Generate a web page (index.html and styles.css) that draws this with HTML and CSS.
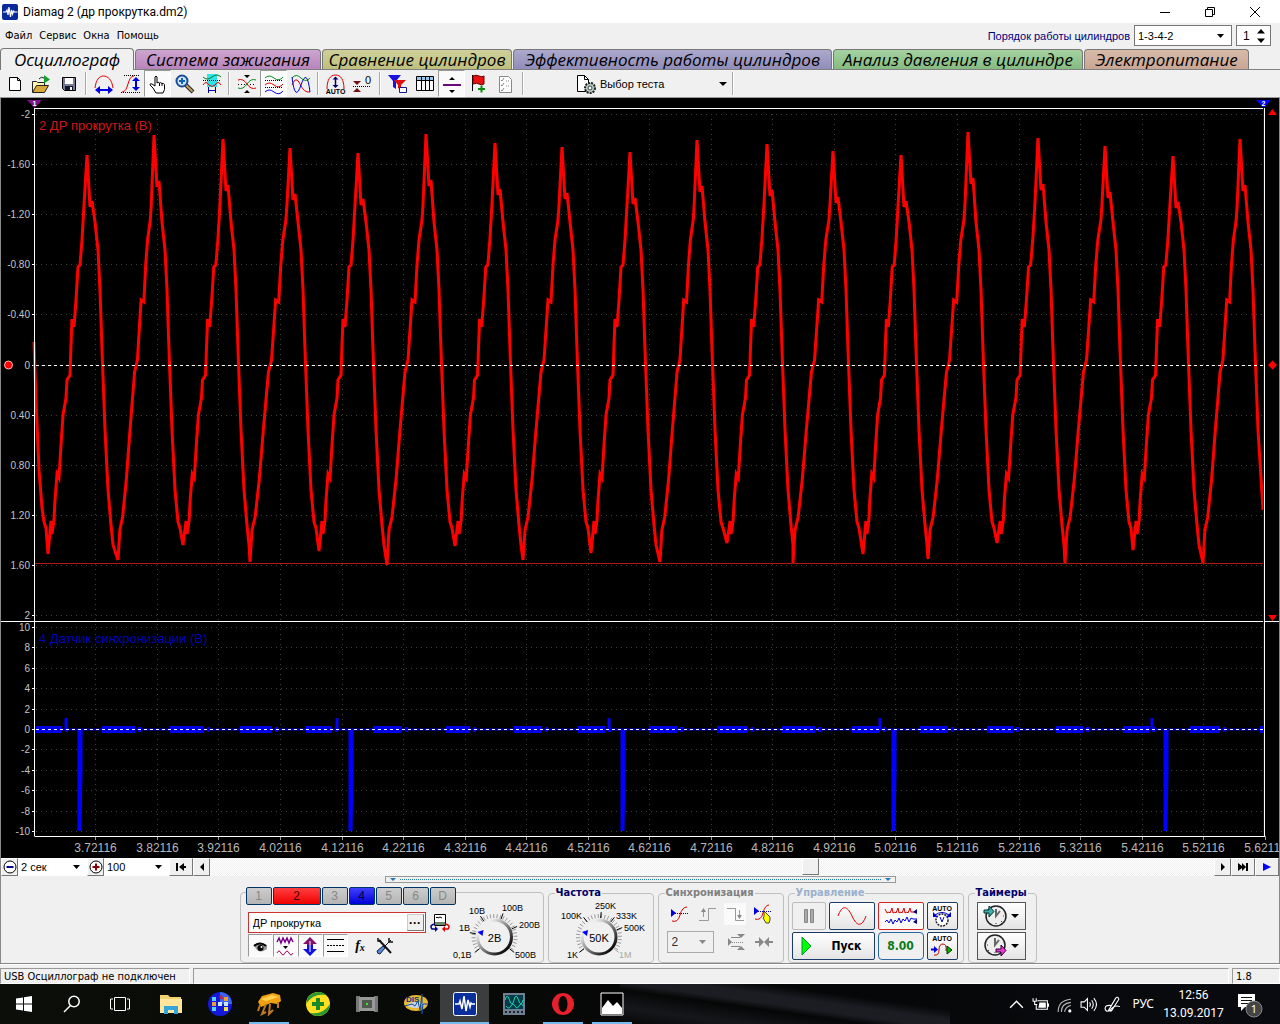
FILE: index.html
```html
<!DOCTYPE html>
<html lang="ru">
<head>
<meta charset="utf-8">
<title>Diamag 2 (др прокрутка.dm2)</title>
<link rel="stylesheet" href="styles.css">
</head>
<body>
<div class="app">
<header class="titlebar">
  <svg class="logo" viewBox="0 0 16 16"><rect width="16" height="16" rx="2" fill="#0a2a9a"/><path d="M1 8h3l1-2 1 5 1-8 1.500 10 1-7 1 4 1-3 1 1h3" fill="none" stroke="#fff" stroke-width="1.200"/></svg>
  <h1>Diamag 2 (др прокрутка.dm2)</h1>
  <div class="winbtns">
    <button aria-label="Свернуть"><svg viewBox="0 0 12 12"><path d="M1 6.500h10" stroke="#000"/></svg></button>
    <button aria-label="Восстановить"><svg viewBox="0 0 12 12"><path d="M1.500 3.500h7v7h-7zM3.500 3.500v-2h7v7h-2" fill="none" stroke="#000"/></svg></button>
    <button aria-label="Закрыть"><svg viewBox="0 0 12 12"><path d="M1 1l10 10M11 1L1 11" stroke="#000"/></svg></button>
  </div>
</header>

<div class="menubar">
  <nav><a href="#">Файл</a><a href="#">Сервис</a><a href="#">Окна</a><a href="#">Помощь</a></nav>
  <div class="order">
    <label for="order">Порядок работы цилиндров</label>
    <span class="combo"><select id="order"><option>1-3-4-2</option></select></span>
    <span class="spin"><input type="text" value="1" aria-label="Номер цилиндра"><svg viewBox="0 0 8 14"><path d="M0 4.500L4 0l4 4.500zM0 9.500h8L4 14z"/></svg></span>
  </div>
</div>

<div class="tabs">
  <button class="tab t1">Осциллограф</button><button class="tab t2">Система зажигания</button><button class="tab t3">Сравнение цилиндров</button><button class="tab t4">Эффективность работы цилиндров</button><button class="tab t5">Анализ давления в цилиндре</button><button class="tab t6">Электропитание</button>
</div>

<div class="toolbar">
  <button aria-label="Новый"><svg viewBox="0 0 24 24"><path d="M6.500 5.500h8l3 3v10h-11zM14.500 5.500v3h3" fill="#fff" stroke="#000"/></svg></button>
  <button aria-label="Открыть"><svg viewBox="0 0 24 24"><path d="M2.500 20V9.500h4l1 1h7V14" fill="#fff6b0" stroke="#222"/><path d="M2.500 20.500l4-7h12l-4 7z" fill="#d8a93a" stroke="#222"/><path d="M14 3l6 4.500-6 4z" fill="#17a02c"/><path d="M9 7q2-3 5-1" fill="none" stroke="#222"/></svg></button>
  <button aria-label="Сохранить"><svg viewBox="0 0 24 24"><path d="M5.500 5.500h13v13h-11l-2-2z" fill="#7a7a94" stroke="#000"/><path d="M8 6h8v6H8z" fill="#fff"/><path d="M8 14h8v4H8z" fill="#101830"/><path d="M13 15h2v3h-2z" fill="#fff"/></svg></button>
  <i class="sep"></i>
  <button aria-label="Период"><svg viewBox="0 0 24 24"><path d="M3 16C4 8 7 4 11.500 4S20 8 21 16" fill="none" stroke="#e00000"/><path d="M5 18h14" stroke="#00d" stroke-width="2"/><path d="M8 14v8l-5-4zM16 14v8l5-4z" fill="#00d"/></svg></button>
  <button aria-label="Амплитуда"><svg viewBox="0 0 24 24"><path d="M5 3.500h16M2 20.500h19" stroke="#000" stroke-dasharray="1 1"/><path d="M3 20c7 0 5-16 12-16" fill="none" stroke="#d00"/><path d="M17 6v12" stroke="#00d" stroke-width="2"/><path d="M13 9h8l-4-4zM13 15h8l-4 4z" fill="#00d"/></svg></button>
  <button class="on" aria-label="Рука"><svg viewBox="0 0 24 24"><path d="M10 21l-3-5-3-3q0-2 2-1l3 2V5q1-2 2 0v6q1-1.500 2.500 0 1-1 2.500.5 1.500-.5 2.500 1v5l-1.500 3.500z" fill="#fff" stroke="#000"/><path d="M13.500 11v3M16 11.500V14" stroke="#000"/></svg></button>
  <button aria-label="Лупа"><svg viewBox="0 0 24 24"><path d="M13 13l7 7" stroke="#222" stroke-width="4"/><path d="M13 13l6.500 6.500" stroke="#c8a060" stroke-width="2"/><circle cx="9" cy="9" r="5.500" fill="#cfe8f8" stroke="#1a4a98" stroke-width="2"/><path d="M6 9h6M9 6v6" stroke="#1060c0" stroke-width="2"/></svg></button>
  <button aria-label="Интервал"><svg viewBox="0 0 24 24"><path d="M7 2h10v18H7z" fill="#2fe3ea"/><path d="M3 5q4 4 9 0t9 0" fill="none" stroke="#0a7a20"/><path d="M3 8.500h18" stroke="#000" stroke-dasharray="1 1"/><path d="M3 13q3-5 6 0 3 3 6 0 3-5 6 0" fill="none" stroke="#d00"/><path d="M7 15h10v7H7z" fill="#f0f0f0"/><path d="M8 18.500h8M8.500 15v6M15.500 15v6" stroke="#00a"/></svg></button>
  <i class="sep"></i>
  <button aria-label="Свести"><svg viewBox="0 0 24 24"><path d="M3 12.500h18" stroke="#000" stroke-dasharray="1 2"/><path d="M3 8q5-2 9 4t9 4" fill="none" stroke="#d00"/><path d="M3 16q5 2 9-4t9-4" fill="none" stroke="#0a8a20"/><path d="M9 3h6l-3 3zM9 21h6l-3-3z"/></svg></button>
  <button class="on" aria-label="Развести"><svg viewBox="0 0 24 24"><g fill="none"><path d="M3 6q4-4 9 0t9-1" stroke="#0a8a20"/><path d="M3 13q4-4 9 0t9-1" stroke="#d00"/><path d="M3 20q4-4 9 0t9-1" stroke="#00d"/><path d="M3 8.500h18M3 15.500h18" stroke="#000" stroke-dasharray="1 1"/></g></svg></button>
  <button aria-label="Наложить"><svg viewBox="0 0 24 24"><g fill="none"><path d="M3 6q4-5 9 0t9 0" stroke="#0a8a20"/><path d="M3 13q4-10 8-1t10 8" stroke="#d00"/><path d="M3 5q3 26 9 8t9 7" stroke="#00d"/></g></svg></button>
  <i class="sep"></i>
  <button aria-label="Авто"><svg viewBox="0 0 24 24"><path d="M3 17C3 8 6 3 11.500 3S20 8 20 17" fill="none" stroke="#d00"/><path d="M11.500 6v8" stroke="#007" stroke-width="1.500"/><path d="M8.500 7.500h6l-3-3zM8.500 13h6l-3 3z" fill="#007"/><text x="11.500" y="22" text-anchor="middle" class="auto">AUTO</text></svg></button>
  <button aria-label="Ноль"><svg viewBox="0 0 24 24"><path d="M2 14.500h18" stroke="#000" stroke-dasharray="1 1"/><path d="M2 9h8l-4 4zM2 20h8l-4-4z" fill="#701010"/><text x="14" y="12" class="ten">0</text></svg></button>
  <i class="sep"></i>
  <button aria-label="Фильтр"><svg viewBox="0 0 24 24"><path d="M2 3h13l-5 6v8l-3-2V9z" fill="#1a10e0"/><path d="M8 8h12l-5 5v5l-3-2v-3z" fill="#e01010"/><path d="M13.500 15.500h7v5h-7z" fill="#fff" stroke="#1a1a90"/></svg></button>
  <button aria-label="Таблица"><svg viewBox="0 0 24 24"><path d="M3.500 4.500h17v14h-17z" fill="#fff" stroke="#000"/><path d="M4 5h16v3H4z" fill="#9cc8ec"/><path d="M3 8.500h18M8.500 5v13M12.500 5v13M16.500 5v13" stroke="#000"/></svg></button>
  <button class="on" aria-label="Линия"><svg viewBox="0 0 24 24"><path d="M3 13h18" stroke="#6a0a7a" stroke-width="2"/><path d="M9 8h6l-3-3zM9 18h6l-3 3z"/></svg></button>
  <button aria-label="Маркер"><svg viewBox="0 0 24 24"><path d="M5.500 3v16" stroke="#000"/><path d="M6 4q3-1.500 6 0t5 0v8q-3 1.500-5 0t-6 0z" fill="#e81010" stroke="#600"/><path d="M11 17h7M14.500 13.500v7" stroke="#0a8a10" stroke-width="2"/></svg></button>
  <button aria-label="Список"><svg viewBox="0 0 24 24"><path d="M5.500 4.500h9l3 3v13h-12z" fill="#fff" stroke="#888"/><path d="M7 8l1 1 2-3M7 13l1 1 2-3M7 18l1 1 2-3M12 9h1m1 0h1M12 14h1m1 0h1" fill="none" stroke="#888"/></svg></button>
  <i class="sep"></i>
  <button class="test"><svg viewBox="0 0 24 24"><path d="M3.500 3.500h7l4 4v12h-11z" fill="#fff" stroke="#000"/><path d="M10.500 3.500v4h4" fill="none" stroke="#000"/><circle cx="16" cy="16" r="5" fill="#b8ccc0" stroke="#222" stroke-width="2" stroke-dasharray="2 1"/><circle cx="16" cy="16" r="2" fill="#fff" stroke="#345"/></svg><span>Выбор теста</span><b class="caret"></b></button>
  <i class="sep"></i>
</div>

<svg class="chart" id="chart" viewBox="0 98 1280 760" role="img" aria-label="Осциллограмма"></svg>

<div class="scroll">
  <button class="sq" aria-label="Сжать"><svg viewBox="0 0 16 16"><circle cx="8" cy="8" r="6" fill="#fff" stroke="#000"/><path d="M4.500 8h7" stroke="#008" stroke-width="2"/></svg></button>
  <select class="s1" aria-label="Развёртка"><option>2 сек</option></select>
  <button class="sq" aria-label="Растянуть"><svg viewBox="0 0 16 16"><circle cx="8" cy="8" r="6" fill="#fff" stroke="#000"/><path d="M4.500 8h7M8 4.500v7" stroke="#800" stroke-width="2"/></svg></button>
  <select class="s2" aria-label="Масштаб"><option>100</option></select>
  <button class="wide" aria-label="В начало"><svg viewBox="0 0 16 16"><path d="M3 4h2v8H3zM11 4v8L6 8zM11 7h2v2h-2z"/></svg></button>
  <button class="sq" aria-label="Назад"><svg viewBox="0 0 16 16"><path d="M10 4v8L6 8z"/></svg></button>
  <span class="track"><span class="thumb"></span></span>
  <button class="sq" aria-label="Вперёд"><svg viewBox="0 0 16 16"><path d="M6 4v8l4-4z"/></svg></button>
  <button class="wide" aria-label="В конец"><svg viewBox="0 0 16 16"><path d="M11 4h2v8h-2zM3 4v8l4-3v3l4-4-4-4v3z"/></svg></button>
  <button class="wide" aria-label="Воспроизвести"><svg viewBox="0 0 16 16"><path d="M4 4v8l8-4z" fill="#00f"/></svg></button>
</div>

<div class="panel">
  <div class="grip"><b></b><i></i><b></b></div>
  <div class="groups">
    <fieldset class="g1" aria-label="Канал">
      <div class="channels"><button>1</button><button class="red">2</button><button>3</button><button class="blue">4</button><button>5</button><button>6</button><button>D</button></div>
      <div class="g1body">
        <div class="name"><span class="field"><input type="text" value="ДР прокрутка" aria-label="Имя канала"><button aria-label="Выбрать">···</button></span>
        <button class="flat" aria-label="Прибор"><svg viewBox="0 0 20 20"><path d="M4.500 1.500h11v11h-11z" fill="#fff" stroke="#000"/><path d="M6 5l1-1 1 1 2-1 2 1" fill="none" stroke="#000"/><path d="M5 9h10v3H5z" fill="#6a8a6a"/><path d="M5 11q-6 1-3 5h3" fill="none" stroke="#008" stroke-width="1.500"/><path d="M5 13v6l3-3z" fill="#008"/><path d="M15 11q6 1 3 5h-3" fill="none" stroke="#d00" stroke-width="1.500"/><path d="M15 13v6l-3-3z" fill="#d00"/></svg></button></div>
        <div class="tools">
          <button class="on" aria-label="Видимость"><svg viewBox="0 0 24 22"><path d="M6 10q6-5 13 0v4q-7 5-11 0z" fill="#999"/><path d="M6 11q6-5 12 0" fill="none" stroke="#000" stroke-width="2"/><circle cx="12.500" cy="13" r="3"/><circle cx="13.500" cy="12" r="1" fill="#fff"/></svg></button>
          <button class="on" aria-label="Сглаживание"><svg viewBox="0 0 24 22"><path d="M4 7l2-4 2 5 2-5 2 4 2-4 2 5 2-5 2 4" fill="none" stroke="#708" stroke-width="1.500"/><path d="M10 11h5l-2.500 3z"/><path d="M4 18q2-4 4 0t4 0 4 0 4 0" fill="none" stroke="#a06"/></svg></button>
          <button class="on" aria-label="Инверсия"><svg viewBox="0 0 24 22"><path d="M12 2l7 7h-4v3H9V9H5z" fill="#80106a"/><path d="M12 21l7-7h-4v-4H9v4H5z" fill="#1010e0"/><path d="M12 6v11" stroke="#fff"/></svg></button>
          <button class="on" aria-label="Линии"><svg viewBox="0 0 24 22"><path d="M4 4.500h17M4 16.500h17" stroke="#000"/><path d="M4 10.500h17" stroke="#000" stroke-dasharray="2 1"/></svg></button>
          <button class="fx">f<small>x</small></button>
          <button aria-label="Настройка"><svg viewBox="0 0 24 22"><path d="M6 5l12 13" stroke="#111" stroke-width="2"/><path d="M18 5l-8 8" stroke="#111"/><path d="M10 11l-6 5q0 3 3 3l5-6z" fill="#5a8ad0" stroke="#124"/><path d="M5 3v3h3M16 3v4h4" fill="none" stroke="#111" stroke-width="1.500"/></svg></button>
        </div>
      </div>
      <label class="dial"><input type="range" aria-label="Диапазон"><svg viewBox="452 894 91 68" id="dial1"></svg></label>
    </fieldset>
    <fieldset class="g2"><legend class="navy">Частота</legend><label class="dial"><input type="range" aria-label="Частота"><svg viewBox="556 894 91 68" id="dial2"></svg></label></fieldset>
    <fieldset class="g3"><legend class="gray">Синхронизация</legend>
      <div class="sync">
        <button class="flat" aria-label="Уровень"><svg viewBox="0 0 20 20"><path d="M2 5v8l5-4z" fill="#00d"/><path d="M6 9.500h13" stroke="#00a" stroke-dasharray="1 1"/><path d="M3 17q6 2 8-6t7-8" fill="none" stroke="#d00"/></svg></button>
        <button class="flat" aria-label="Фронт"><svg viewBox="0 0 20 20"><path d="M2 16.500h9.500v-12H19M6.500 13V6" fill="none" stroke="#999"/><path d="M4 8h5l-2.500-4z" fill="#888"/></svg></button>
        <button class="flat pressed" aria-label="Спад"><svg viewBox="0 0 20 20"><path d="M2 4.500h8.500v12H19M14.500 6v7" fill="none" stroke="#999"/><path d="M12 11h5l-2.500 4z" fill="#888"/></svg></button>
        <button class="flat" aria-label="Указать"><svg viewBox="0 0 20 20"><path d="M1 3v8l5-4z" fill="#00d"/><path d="M5 7.500h14" stroke="#00a" stroke-dasharray="1 1"/><path d="M2 15q6 2 8-6t6-8" fill="none" stroke="#d00"/><path d="M11 7l6 6v3l-1 3h-3l-3-5 1-1z" fill="#ff0" stroke="#000" stroke-width=".7"/></svg></button>
      </div>
      <div class="sync2"><select disabled aria-label="Канал синхронизации"><option>2</option></select>
        <svg viewBox="0 0 20 20"><path d="M2 6v8l4-4zM11 2h8l-4 4zM11 18h8l-4-4z" fill="#888"/><path d="M5 5.500h9M5 14.500h9" stroke="#888"/><path d="M6 10.500h12" stroke="#888" stroke-dasharray="1 1"/></svg>
        <svg viewBox="0 0 20 20"><path d="M1 9h4V5l5 5-5 5v-4H1zM19 9h-4V5l-5 5 5 5v-4h4z" fill="#888"/></svg></div>
    </fieldset>
    <fieldset class="g4"><legend class="pale">Управление</legend>
      <div class="ctl">
        <button disabled aria-label="Пауза"><svg viewBox="0 0 20 20"><path d="M5.500 3.500h3v13h-3zM11.500 3.500h3v13h-3z" fill="#aaa" stroke="#888"/></svg></button>
        <button class="b" aria-label="Синус"><svg class="w36" viewBox="0 0 36 22"><path d="M4 11C8 0 13 0 18 11s10 11 14 0" fill="none" stroke="#d00"/></svg></button>
        <button class="r" aria-label="Режим"><svg class="w36" viewBox="0 0 36 22"><path d="M2 4l2 4 2-1 1 1 2-5 1 5 2-1 1 1 2-5 1 5 2-1 1 1 2-5 1 5 2-1 1 1 2-5 1 4h5" fill="none" stroke="#d00"/><path d="M2 17l2-2 2 3 2-4 2 5 2-4 2 2 2-4 2 5 2-4 2 2 2-4 2 5 2-4 2 1h4" fill="none" stroke="#00d"/><path d="M34 4v5l-4-2zM34 14v5l-4-2z" fill="#008"/></svg></button>
        <button class="b" aria-label="Авто диапазон"><svg class="w24" viewBox="0 0 24 24"><text x="12" y="7" text-anchor="middle" class="auto">AUTO</text><circle cx="12" cy="16" r="6" fill="#fff" stroke="#222" stroke-width="1.500" stroke-dasharray="2 1"/><path d="M10 13l2 5 2-5M5 11q7-5 14 0" fill="none" stroke="#00c"/><path d="M3 8v5h5zM21 8v5h-5z" fill="#00c"/></svg></button>
        <button class="b start"><svg viewBox="0 0 20 20"><path d="M5 1v18l9-9z" fill="#0f0" stroke="#093"/></svg><span>Пуск</span></button>
        <button class="lb num">8.00</button>
        <button class="b" aria-label="Авто синхронизация"><svg class="w24" viewBox="0 0 24 24"><text x="12" y="7" text-anchor="middle" class="auto">AUTO</text><path d="M4 21q5 1 5-5t4-6q4 0 3 7" fill="none" stroke="#b00"/><path d="M1 15.500h5" stroke="#00d" stroke-width="2"/><path d="M4 12v7l4-3.500z" fill="#00d"/><path d="M17 12v8l5-4z" fill="#0b0" stroke="#030"/></svg></button>
      </div>
    </fieldset>
    <fieldset class="g5"><legend class="navy">Таймеры</legend>
      <div class="timers">
        <button aria-label="Таймер запуска"><svg viewBox="0 0 24 24"><circle cx="13" cy="12" r="10" fill="#eee" stroke="#222" stroke-width="1.500"/><path d="M13 5v7l4-5" fill="none" stroke="#666" stroke-width="2"/><path d="M13 19v1M20 12h1M18 17l1 1" stroke="#333"/><path d="M1 6h5V2l5 5.500L6 13V9H1z" fill="#3cb0a8" stroke="#033"/></svg><b class="caret"></b></button>
        <button aria-label="Таймер остановки"><svg viewBox="0 0 24 24"><circle cx="12" cy="11" r="10" fill="#eee" stroke="#222" stroke-width="1.500"/><path d="M12 4v7l4-5" fill="none" stroke="#666" stroke-width="2"/><path d="M12 18v1M4 11h1M6 16l-1 1" stroke="#333"/><path d="M13 15h5v-4l5 5.500-5 5.500v-4h-5z" fill="#e83ad0" stroke="#303"/></svg><b class="caret"></b></button>
      </div>
    </fieldset>
  </div>
</div>

<footer class="status"><span class="st1">USB Осциллограф не подключен</span><span class="st2"></span><span class="st3">1.8</span></footer>

<div class="taskbar">
  <button class="sys" aria-label="Пуск"><svg viewBox="0 0 20 20"><path d="M2 4.500l7-1v6H2zM10 3.300l8-1.300v7.500h-8zM2 10.500h7v6l-7-1zM10 10.500h8V18l-8-1.300z" fill="#fff"/></svg></button>
  <button class="sys" aria-label="Поиск"><svg viewBox="0 0 20 20"><circle cx="12" cy="7.500" r="5.200" fill="none" stroke="#fff" stroke-width="1.500"/><path d="M8.500 11.500L2 18" stroke="#fff" stroke-width="1.500"/></svg></button>
  <button class="sys" aria-label="Представление задач"><svg viewBox="0 0 20 20"><path d="M4.500 3.500h11v13h-11zM3 5H.5v10H3M17 5h2.500v10H17" fill="none" stroke="#fff"/></svg></button>
  <span class="apps">
  <button aria-label="Проводник"><svg viewBox="0 0 24 24"><path d="M1 3h8l2 2h11v15H1z" fill="#f0cf70"/><path d="M1 7h22v14H1z" fill="#ffe69a"/><path d="M5 22v-8h14v8h-4v-4H9v4z" fill="#35a4dc"/></svg></button>
  <button aria-label="Сканер"><svg viewBox="0 0 24 24"><circle cx="12" cy="12" r="12" fill="#1418d8"/><path d="M12 0a12 12 0 0112 12H12z" fill="#3c64f0"/><path d="M4 5h4v4H4zM4 15h4v4H4z" fill="#5ad0f0"/><path d="M4 10h4v4H4zM16 5h4v4h-4z" fill="#e8a030"/><path d="M16 10h4v4h-4zM10 10h4v4h-4z" fill="#c8e8ff"/><path d="M16 15h4v4h-4z" fill="#f0e040"/><path d="M11 4l3-1 1 4h-3z" fill="#c02040"/></svg></button>
  <button class="run" aria-label="Утилита"><svg viewBox="0 0 24 24"><path d="M1 10l4-6 11-3 7 2 1 6-4 3-6-1-10 4z" fill="#f0a010"/><path d="M4 7l11-4 7 2-13 4z" fill="#ffd050"/><path d="M3 13l-2 6M9 12l-4 10 4-2M13 12l-1 10 4-4M21 10v6" fill="none" stroke="#c07a20" stroke-width="2"/></svg></button>
  <button aria-label="Антивирус"><svg viewBox="0 0 24 24"><circle cx="12" cy="12" r="12" fill="#ffe020"/><path d="M0 12Q1 1 12 0q5 0 8 3Q7 1 0 12zM24 12q-1 11-12 12-5 0-8-3 13 2 20-9z" fill="#2a9a30"/><path d="M12 6v12M6 12h12" stroke="#1a8a28" stroke-width="4"/></svg></button>
  <button aria-label="Адаптер"><svg viewBox="0 0 24 24"><path d="M1 4h4v16H1zM19 4h4v16h-4z" fill="#777"/><path d="M4 5h16v14H4z" fill="#999"/><path d="M7 8h10v8H7z" fill="#505850"/><path d="M11 11h2v2h-2z" fill="#3e3"/></svg></button>
  <button aria-label="DIS"><svg viewBox="0 0 24 24"><ellipse cx="12" cy="11" rx="12" ry="8" fill="#e8b830"/><ellipse cx="12" cy="13" rx="9" ry="3" fill="#c8d4e8"/><text x="2" y="10" class="dis">DIS</text><path d="M1 14l7-2 3 2 3-5 2 9 2-16v20l1-10h5" fill="none" stroke="#124a90"/></svg></button>
  <button class="run act" aria-label="Diamag"><svg viewBox="0 0 24 24"><rect x=".5" y=".5" width="23" height="23" rx="2" fill="#0a2f9c" stroke="#fff"/><path d="M2 12h4l1-3 2 8 2-13 2 15 2-11 2 7 1-4 1 1h3" fill="none" stroke="#fff" stroke-width="1.500"/></svg></button>
  <button aria-label="Осциллограф"><svg viewBox="0 0 24 24"><path d="M1 1h22v22H1z" fill="#708090"/><path d="M3 3h18v14H3z" fill="#033c4c"/><path d="M3 8q2-8 4.500 0t4.500 0 4.500 0 4.500 0M4 14q3 4 5 0t4 0 4 0 4 0" fill="none" stroke="#20d8a0"/><path d="M3 20h18" stroke="#223" stroke-width="2" stroke-dasharray="2 2"/></svg></button>
  <button class="run" aria-label="Opera"><svg viewBox="0 0 24 24"><path fill-rule="evenodd" d="M12 1a11 11 0 100 22 11 11 0 000-22zm0 3c3 0 4.500 4 4.500 8S15 20 12 20s-4.500-4-4.500-8S9 4 12 4z" fill="#e8202c"/></svg></button>
  <button class="run" aria-label="Фотографии"><svg viewBox="0 0 24 24"><path d="M1 1h22v22H1z" fill="#000" stroke="#fff"/><path d="M2 22v-6l6-8 5 6 4-4 5 6v6z" fill="#fff"/></svg></button>
  </span>
  <div class="tray">
    <svg viewBox="0 0 16 16"><path d="M2 11l6-6 6 6" fill="none" stroke="#fff" stroke-width="1.300"/></svg>
    <svg viewBox="0 0 16 16"><path d="M5 4.500h9.500v8H4V8M15.500 7v3M1 2v3h3V2M2.500 5v3H5" fill="none" stroke="#fff"/><path d="M7 6h6v5H6z" fill="#fff"/></svg>
    <svg viewBox="0 0 16 16"><path d="M2 15Q2 4 14 3M5 15q0-8 9-9M8 15q1-5 6-6" fill="none" stroke="#bbb"/><circle cx="13" cy="14" r="1.500" fill="#fff"/></svg>
    <svg viewBox="0 0 16 16"><path d="M1 5.500h3l3-3v11l-3-3H1zM9 6q1.500 2 0 4M11 4q3 4 0 8M13 2q5 6 0 12" fill="none" stroke="#fff"/></svg>
    <svg viewBox="0 0 16 16"><path d="M4 14L11 2q2-2 3 1L7 14zM7 9Q1 8 1 12q1 4 5 1 4-5 9-3" fill="none" stroke="#fff"/></svg>
    <span class="lang">РУС</span>
    <span class="clock">12:56<br>13.09.2017</span>
    <svg class="note" viewBox="0 0 28 28"><path d="M3 4h17v13H10l-4 4v-4H3z" fill="#fff"/><path d="M6 7.500h11M6 10.500h11M6 13.500h8" stroke="#111"/><circle cx="19" cy="19" r="8" fill="#444" stroke="#888"/><text x="19" y="23" text-anchor="middle" class="cnt">1</text></svg>
  </div>
</div>
</div>
<script src="chart.js"></script>
</body>
</html>
```
FILE: styles.css
```css
* { box-sizing: border-box; }
body { margin: 0; background: #f0f0f0; color: #000; font: 11px/14px "DejaVu Sans Condensed", "Noto Sans", sans-serif; }
button, input, select { font: inherit; color: inherit; margin: 0; padding: 0; border: 0; background: none; border-radius: 0; }
button { display: flex; align-items: center; justify-content: center; }
svg { display: block; flex: none; }
a { color: inherit; text-decoration: none; }
.app { display: flex; flex-direction: column; min-height: 100vh; }

.titlebar { display: flex; align-items: center; height: 23px; background: #fff; padding: 0 3px 0 2px; }
.logo { width: 16px; height: 16px; }
h1 { margin: 0 0 0 5px; font: 12px/16px Roboto, sans-serif; flex: 1; }
.winbtns { display: flex; }
.winbtns button { width: 45px; height: 20px; }
.winbtns svg { width: 12px; height: 12px; }

.menubar { display: flex; height: 25px; align-items: center; justify-content: space-between; padding: 0 9px 0 5px; }
nav { display: flex; gap: 7px; }
.order { display: flex; align-items: center; gap: 4px; font: 12px/14px "Liberation Sans", sans-serif; }
.order label { color: #00007c; font-size: 11px; }
.combo, .spin { display: flex; align-items: center; background: #fff; border: 1px solid #777; height: 21px; }
select { appearance: none; background: #fff url("data:image/svg+xml,%3Csvg xmlns='http://www.w3.org/2000/svg' width='8' height='4'%3E%3Cpath d='M0 0h7L3.500 4z'/%3E%3C/svg%3E") no-repeat right 6px center; }
.combo select { width: 96px; height: 19px; padding-left: 3px; font-size: 11px; }
.spin { width: 35px; padding-right: 5px; justify-content: space-between; }
.spin input { width: 18px; padding-left: 6px; }
.spin svg { width: 8px; height: 14px; }

.tabs { display: flex; align-items: flex-end; height: 22px; border-bottom: 1px solid #808080; gap: 1px; }
.tab { height: 20px; border: 1px solid #777; border-bottom: 0; border-radius: 4px 4px 0 0; font: italic 17px/18px "Open Sans", sans-serif; white-space: nowrap; overflow: hidden; }
.t1 { width: 134px; height: 22px; background: #f0f0f0; margin-bottom: -1px; }
.t2 { width: 186px; background: linear-gradient(#cda6d0, #b784bb); }
.t3 { width: 190px; background: linear-gradient(#cfd09a, #bfc07c); }
.t4 { width: 319px; background: linear-gradient(#aca9cc, #918dba); }
.t5 { width: 250px; background: linear-gradient(#a6d2a2, #84bb80); }
.t6 { width: 165px; background: linear-gradient(#d8baa9, #c9a693); }

.toolbar { display: flex; align-items: center; height: 28px; padding-left: 1px; border-bottom: 1px solid #999; font: 12px/14px "Liberation Sans", sans-serif; }
.toolbar button { width: 27px; height: 27px; flex: none; }
.toolbar svg { width: 24px; height: 24px; }
.on { background: #fafafa; border: 1px solid; border-color: #999 #fff #fff #999; }
.sep { width: 2px; height: 23px; margin: 0 3px; background: #aaa; border-right: 1px solid #fff; flex: none; }
.toolbar .test { width: 202px; padding: 0 2px 0 47px; justify-content: flex-start; gap: 2px; }
.test span { flex: 1; text-align: left; font-size: 11px; white-space: nowrap; }
.caret { border: 4px solid transparent; border-top-color: #000; border-bottom: 0; width: 0; }
.auto { font: bold 7px "Liberation Sans", sans-serif; }
.ten { font: 11px "Liberation Sans", sans-serif; }

.chart { width: 100%; height: auto; background: #000; font-family: "Liberation Sans", sans-serif; }
.chart .y { font-size: 10px; fill: #c4c4c4; text-anchor: end; }
.chart .x { font-size: 12px; fill: #b8b8b8; text-anchor: middle; }
.chart .ttl { font-size: 13px; }
.chart .mk { font: bold 7px "Liberation Sans", sans-serif; fill: #fff; text-anchor: middle; }

.scroll { display: flex; height: 18px; border: 0 solid #888; border-width: 0 1px; font: 12px/14px "Liberation Sans", sans-serif; }
.scroll button, .thumb { background: #f0f0f0; border: 1px solid; border-color: #fff #777 #777 #fff; }
.scroll svg { width: 16px; height: 16px; }
.sq { width: 17px; }
.wide { width: 24px; }
.scroll select { padding-left: 3px; font-size: 11px; }
.s1 { width: 69px; }
.s2 { width: 65px; }
.track { flex: 1; display: flex; background: repeating-conic-gradient(#fff 0 25%, #f0f0f0 0 50%) 0 0 / 2px 2px; }
.thumb { width: 17px; height: 17px; margin-left: 59%; }

.panel { border: 1px solid #888; border-top: 0; height: 88px; display: flex; flex-direction: column; align-items: center; }
.grip { width: 511px; height: 7px; border: 1px solid #999; display: flex; align-items: center; gap: 4px; padding: 0 4px; }
.grip i { flex: 1; border-top: 1px dotted #27a; }
.grip b { border: 3px solid transparent; border-top-color: #27b; border-bottom: 0; }
.groups { display: flex; gap: 4px; align-items: flex-end; height: 80px; padding-right: 4px; }
fieldset { margin: 0; padding: 0; min-width: 0; border: 1px solid #c0c0c0; border-radius: 4px; height: 76px; }
legend { margin-left: 6px; padding: 0 1px; font: bold 11px/12px "DejaVu Sans Condensed", "DejaVu Sans", sans-serif; height: 12px; white-space: nowrap; }
.navy { color: #00006c; }
.gray { color: #808080; }
.pale { color: #9ab0cc; }
.g1 { width: 304px; height: 71px; display: grid; grid-template-columns: 211px 91px; }
.g2 { width: 106px; }
.g3 { width: 126px; }
.g4 { width: 176px; }
.g5 { width: 69px; }
.channels { grid-column: 1 / 3; justify-self: start; display: flex; gap: 1px; margin: -6px 0 0 5px; height: 18px; background: #f0f0f0; font: 12px/14px "Liberation Sans", sans-serif; }
.channels button { width: 26px; height: 18px; border: 1px solid #003366; border-radius: 2px; background: linear-gradient(#ccc, #b4b4b4); color: #888; }
.channels .red { width: 48px; background: linear-gradient(#ff4040, #f00000); color: #400; }
.channels .blue { background: linear-gradient(#4040ff, #0000d8); color: #004; }
.g1body { padding: 7px 0 0 7px; }
.name { display: flex; gap: 4px; align-items: center; }
.field { display: flex; width: 178px; height: 21px; border: 1px solid #c33; background: #fff; padding: 1px; font: 12px/14px "Liberation Sans", sans-serif; }
.field input { flex: 1; min-width: 0; padding-left: 3px; font-size: 11px; }
.field button { width: 17px; background: #f0f0f0; border: 1px solid; border-color: #ccc #777 #777 #ccc; font-weight: bold; }
.flat svg { width: 20px; height: 20px; }
.tools { display: flex; margin-top: 1px; }
.tools button { width: 25px; height: 23px; }
.tools svg { width: 24px; height: 22px; }
.fx { font: italic bold 14px/16px "Liberation Serif", serif; }
.fx small { font-size: 10px; padding-top: 4px; }
.dial { position: relative; display: block; width: 91px; height: 68px; }
.dial input { position: absolute; inset: 0; width: 100%; height: 100%; opacity: 0; }
.dial svg { width: 91px; height: 68px; font: 9px "Liberation Sans", sans-serif; }
.dial .big { font-size: 11px; text-anchor: middle; }
.g1 .dial { margin-top: -10px; }
.g2 .dial { margin: -4px 0 0 7px; }
.sync { display: flex; gap: 6px; padding: 4px 0 0 9px; }
.sync button { width: 22px; height: 22px; }
.pressed { background: #fafafa; }
.sync2 { display: flex; align-items: center; gap: 8px; padding: 6px 0 0 8px; font: 12px/14px "Liberation Sans", sans-serif; }
.sync2 svg { width: 20px; height: 20px; }
.sync2 select { width: 47px; height: 22px; border: 1px solid #aaa; padding-left: 4px; background-color: #f0f0f0; color: #333; opacity: 1; margin-right: 4px; background-image: url("data:image/svg+xml,%3Csvg xmlns='http://www.w3.org/2000/svg' width='8' height='4'%3E%3Cpath fill='%23888' d='M0 0h7L3.500 4z'/%3E%3C/svg%3E"); }
.ctl { display: grid; grid-template-columns: 34px 46px 46px 31px; grid-auto-rows: 28px; gap: 2px 3px; padding: 3px 0 0 3px; }
.ctl button { border: 1px solid #bbb; border-radius: 2px; }
.ctl .b { border-color: #1a3c66; background: linear-gradient(#fff, #e4e4e4); }
.ctl .r { border-color: #d22; background: #fafafa; }
.ctl .lb { border-color: #2a66a0; border-radius: 4px; }
.ctl svg { width: 20px; height: 20px; }
.ctl .w36 { width: 36px; height: 22px; }
.ctl .w24 { width: 24px; height: 24px; }
.ctl .start { grid-column: 1 / 3; font: bold 12px/14px "DejaVu Sans Condensed", sans-serif; justify-content: flex-start; padding-left: 4px; }
.start span { margin-left: 15px; }
.ctl .num { font: bold 12px/14px "DejaVu Sans Condensed", sans-serif; color: #0a7a1a; }
.timers { display: flex; flex-direction: column; gap: 2px; padding: 3px 0 0 8px; }
.timers button { width: 49px; height: 28px; gap: 4px; border: 1px solid #555; background: linear-gradient(#fff, #e4e4e4); }
.timers svg { width: 24px; height: 24px; }

.status { display: flex; height: 20px; gap: 3px; padding-top: 3px; border-top: 1px solid #fff; }
.status span { border: 1px solid; border-color: #999 #fff #fff #999; padding: 1px 3px; height: 16px; white-space: nowrap; }
.st1 { width: 190px; }
.st2 { flex: 1; }
.st3 { width: 48px; }

.taskbar { display: flex; align-items: center; flex: 1; min-height: 40px; color: #fff; background: linear-gradient(188deg, transparent 30%, #1b1d22 42%, #1b1d22 52%, transparent 60%, #15171b 80%, transparent) 620px 0 / 330px 40px no-repeat, linear-gradient(90deg, #0b0e09, #050606 60%, #0a0b10); font: 12px/18px "Noto Sans", sans-serif; }
.sys { width: 48px; height: 40px; }
.sys svg { width: 20px; height: 20px; }
.apps { display: flex; padding-left: 2px; flex: 1; }
.apps button { width: 49px; height: 40px; }
.apps svg { width: 24px; height: 24px; }
.run { background: linear-gradient(#76b9ed, #76b9ed) center bottom / 40px 2px no-repeat; }
.run.act { background: linear-gradient(#76b9ed, #76b9ed) center bottom / 49px 2px no-repeat, #3b3d3f; }
.dis { font: bold 8px "Liberation Sans", sans-serif; fill: #123a80; }
.tray { display: flex; align-items: center; gap: 7px; padding-right: 4px; height: 40px; }
.tray svg { width: 17px; height: 17px; }
.lang { font-size: 12px; padding-left: 4px; }
.clock { width: 65px; text-align: center; font: 12px/18px Roboto, sans-serif; }
.tray .note { width: 28px; height: 28px; margin: 0 13px 0 2px; }
.cnt { font: 11px "Noto Sans", sans-serif; fill: #fff; }
```
FILE: chart.js
```
const chart = document.getElementById('chart');
let out = '';
const line = (x1, y1, x2, y2, attrs) => { out += `<line x1="${x1}" y1="${y1}" x2="${x2}" y2="${y2}" ${attrs}/>`; };
const text = (x, y, cls, value, attrs = '') => { out += `<text x="${x}" y="${y}" class="${cls}" ${attrs}>${value}</text>`; };
const grid = 'stroke="#3e3e34" stroke-dasharray="1 4"';
const left = 34.5, right = 1264.5;

// horizontal grid and scales of both channels
['-2', '-1.60', '-1.20', '-0.80', '-0.40', '0', '0.40', '0.80', '1.20', '1.60', '2'].forEach((v, i) => {
  const y = Math.round(114 + i * 50.1) + 0.5;
  line(36, y, right, y, grid);
  line(32, y, 35, y, 'stroke="#fff"');
  text(30, y + 3, 'y', v);
});
for (let v = 10; v >= -10; v -= 2) {
  const y = Math.round(729 - v * 10.2) + 0.5;
  line(36, y, right, y, grid);
  line(32, y, 35, y, 'stroke="#fff"');
  text(30, y + 3, 'y', v);
}
for (let k = 0; k < 20; k++) {
  const x = Math.round(95.300 + k * 61.550) + 0.5;
  if (k < 19) line(x, 114, x, 836, grid);
  line(x, 836, x, 840, 'stroke="#999"');
  text(x, 852, 'x', (3.72116 + k * 0.1).toFixed(5));
}

// channel 4: synchronisation pulses
line(left, 729.5, right, 729.5, 'stroke="#0000d0" stroke-width="2"');
[[36, 62], [102, 135], [170, 204], [240, 272], [306, 332], [373, 402], [446, 470], [514, 542], [578, 605], [649, 677],
 [717, 748], [782, 815], [852, 880], [920, 948], [987, 1013], [1056, 1083], [1123, 1149], [1190, 1220], [1260, 1263]].forEach(([a, b]) => {
  line(a, 729.5, b, 729.5, 'stroke="#0000e8" stroke-width="7"');
  if (b < 1260) line(b + 3, 729.5, b + 6, 729.5, 'stroke="#0000e8" stroke-width="5"');
});
[66, 337, 609, 880, 1152].forEach(x => {
  line(x, 718, x, 730, 'stroke="#00f" stroke-width="3"');
  out += `<path d="M${x + 11.500} 730h5v40l-1 61h-4z" fill="#00f"/>`;
});
line(36, 729.5, right, 729.5, 'stroke="#fff" stroke-dasharray="3 3"');
text(39, 643, 'ttl', '4 Датчик синхронизации (В)', 'fill="#0000b8"');

// channel 2: cranking wave; [x, y] of every trough and the following peak
line(left, 563.5, right, 563.5, 'stroke="#b01818"');
const cycles = [[48, 554, 87, 155], [118, 560, 154, 135], [183, 545, 223, 139], [250, 562, 290, 148], [319, 551, 358, 153],
 [387, 565, 426, 134], [455, 546, 495, 143], [523, 560, 562, 147], [591, 553, 630, 152], [660, 562, 697, 140], [727, 543, 767, 144],
 [793, 563, 833, 151], [863, 554, 901, 155], [928, 559, 968, 132], [997, 543, 1038, 138], [1065, 563, 1105, 146], [1133, 550, 1173, 156], [1203, 563, 1240, 139]];
const riseOdd = [[3, 521], [4, 534], [6, 520], [7, 500], [9, 474], [11, 478], [13, 445], [15, 415], [18, 398], [19, 380], [22, 375], [23, 345], [24, 319], [26, 327], [28, 300], [30, 267], [32, 265], [34, 240], [36, 205]];
const riseEven = [[2, 530], [5, 517], [9, 480], [13, 430], [16, 395], [18, 372], [21, 360], [23, 330], [25, 300], [28, 302], [30, 265], [32, 240], [35, 220], [36, 205]];
const pts = [[34, 342], [36, 400], [39, 470], [42, 508], [44, 522], [46, 528]];
cycles.forEach(([tx, ty, px, py], i) => {
  pts.push([tx, ty]);
  const k = (px - tx) / 39;
  (i % 2 ? riseEven : riseOdd).forEach(([dx, y]) => pts.push([tx + dx * k, y]));
  pts.push([px, py], [px + 3, py + 52], [px + 5, py + 46], [px + 8, 222], [px + 11, 250], [px + 13, 290], [px + 15, 350], [px + 18, 430]);
  if (i === cycles.length - 1) pts.push([1263, 510]);
  else if (i % 2) pts.push([px + 21, 490], [px + 24, 522], [px + 26, 528]);
  else pts.push([px + 21, 490], [px + 24, 525], [px + 26, 545]);
});
out += `<polyline points="${pts.map(p => p.join(',')).join(' ')}" fill="none" stroke="#f00" stroke-width="3"/>`;
line(36, 365.5, right, 365.5, 'stroke="#fff" stroke-dasharray="3 3"');
text(39, 130, 'ttl', '2 ДР прокрутка (В)', 'fill="#d01818"');

// frame, cursors and markers
line(left, 108.5, right, 108.5, 'stroke="#fff"');
line(0, 621.5, 1279, 621.5, 'stroke="#fff"');
line(left, 836.5, 1265, 836.5, 'stroke="#fff"');
line(left, 108, left, 836, 'stroke="#fff"');
line(right, 108, right, 836, 'stroke="#fff"');
line(1263.500, 108, 1263.500, 836, 'stroke="#0000b0"');
out += '<path d="M27 100h15l-7.500 8z" fill="#80108a"/><path d="M1256 100h15l-7.500 8z" fill="#00f"/>';
text(34.5, 106, 'mk', '1');
text(1263.500, 106, 'mk', '2');
out += '<circle cx="8.500" cy="365" r="4" fill="#f00" stroke="#fbb"/><path d="M1268 115h9l-4.500-6zM1268 615h9l-4.500 6zM1268 365l4.500-4.500 4.500 4.500-4.500 4.500z" fill="#f00"/>';
line(0.5, 98, 0.5, 858, 'stroke="#888"');
line(1279.500, 98, 1279.500, 858, 'stroke="#888"');
chart.innerHTML = out;

// rotary knobs
function knob(id, cx, cy, r, value, start, end, labels) {
  let s = `<defs><linearGradient id="${id}g" x1="0" y1="0" x2="1" y2="1"><stop offset=".2" stop-color="#eee"/><stop offset=".9" stop-color="#000"/></linearGradient></defs>`;
  for (let a = start; a <= end; a += 9) {
    const t = a * Math.PI / 180;
    s += `<line x1="${cx + Math.cos(t) * (r + 2)}" y1="${cy + Math.sin(t) * (r + 2)}" x2="${cx + Math.cos(t) * (r + 6)}" y2="${cy + Math.sin(t) * (r + 6)}" stroke="#999"/>`;
  }
  s += `<circle cx="${cx}" cy="${cy}" r="${r}" fill="#f0f0f0" stroke="url(#${id}g)" stroke-width="3"/>`;
  labels.forEach(([x, y, v, a, c]) => {
    const t = a * Math.PI / 180;
    s += `<line x1="${cx + Math.cos(t) * (r + 2)}" y1="${cy + Math.sin(t) * (r + 2)}" x2="${cx + Math.cos(t) * (r + 8)}" y2="${cy + Math.sin(t) * (r + 8)}" stroke="${c || '#000'}"/><text x="${x}" y="${y}" fill="${c || '#000'}">${v}</text>`;
  });
  s += `<path d="M${cx - 17} ${cy - 5}l6-2-1 6z" fill="#00f"/><text class="big" x="${cx}" y="${cy + 5}">${value}</text>`;
  document.getElementById(id).innerHTML = s;
}
knob('dial1', 494.5, 936, 17, '2В', 142, 398, [[453, 957, '0,1В', 142], [459, 930, '1В', 190], [469, 913, '10В', 236], [502, 910, '100В', 290], [519, 927, '200В', 335], [515, 957, '500В', 398]]);
knob('dial2', 599, 936, 17, '50K', 142, 398, [[567, 957, '1K', 142], [561, 918, '100K', 232], [595, 908, '250K', 275], [616, 918, '333K', 308], [624, 930, '500K', 338], [619, 957, '1M', 38, '#aaa']]);
```
